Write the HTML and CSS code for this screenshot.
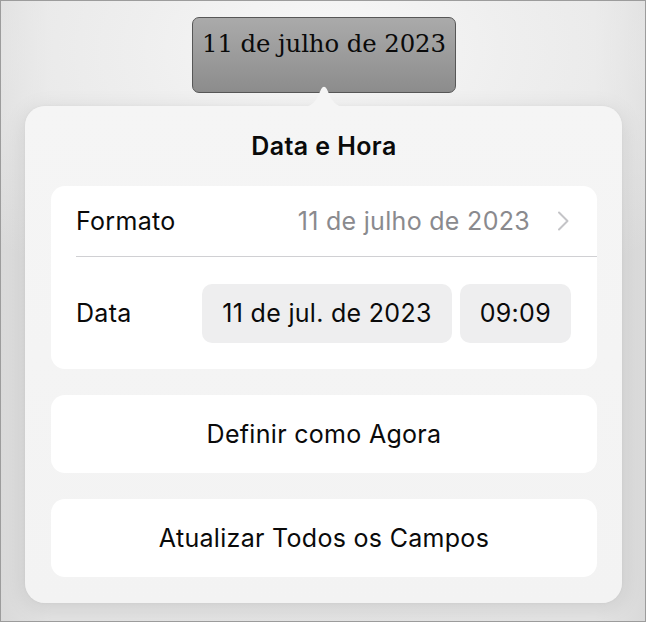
FILE: index.html
```html
<!DOCTYPE html>
<html lang="pt">
<head>
<meta charset="utf-8">
<title>Data e Hora</title>
<link rel="stylesheet" href="styles.css">
</head>
<body>
<div class="stage">
  <div class="field">11 de julho de 2023</div>
  <div class="popover">
    <svg class="arrow" width="48" height="22" viewBox="0 0 48 22" aria-hidden="true">
      <path d="M0 22 C10 22 14 19 18 11 L21.2 4 Q24 -0.6 26.8 4 L30 11 C34 19 38 22 48 22 Z" fill="#f5f5f5"/>
    </svg>
    <div class="title">Data e Hora</div>
    <div class="card">
      <div class="row row-format">
        <span class="label">Formato</span>
        <span class="value">11 de julho de 2023</span>
        <svg class="chevron" width="14" height="20" viewBox="0 0 14 20" aria-hidden="true">
          <path d="M3 1.5 L11.5 10 L3 18.5" fill="none" stroke="#c4c4c7" stroke-width="2" stroke-linecap="round" stroke-linejoin="round"/>
        </svg>
      </div>
      <div class="divider"></div>
      <div class="row row-date">
        <span class="label">Data</span>
        <div class="pills">
          <span class="pill">11 de jul. de 2023</span>
          <span class="pill">09:09</span>
        </div>
      </div>
    </div>
    <div class="card button">Definir como Agora</div>
    <div class="card button">Atualizar Todos os Campos</div>
  </div>
</div>
</body>
</html>
```
FILE: styles.css
```css
* { box-sizing: border-box; }

html, body {
  margin: 0;
  padding: 0;
}

body {
  width: 646px;
  height: 622px;
  overflow: hidden;
  border: 1px solid #9c9c9c;
  background:
    radial-gradient(ellipse 70% 45% at 50% 8%, rgba(248,248,248,1) 0%, rgba(240,240,240,0.9) 40%, rgba(226,226,226,0) 100%),
    linear-gradient(to right, #d9d9d9 0%, #e3e3e3 8%, #e4e4e4 92%, #d9d9d9 100%);
  font-family: Inter, "Noto Sans", sans-serif;
  color: #0a0a0a;
}

.stage {
  display: flex;
  flex-direction: column;
  align-items: flex-start;
  padding-top: 16px;
}

.field {
  margin-left: 191px;
  width: 264px;
  height: 76px;
  border: 1px solid #575757;
  border-radius: 7px;
  background: linear-gradient(to bottom, #aaaaaa 0%, #9a9a9a 55%, #8c8c8c 100%);
  font-family: "DejaVu Serif", "Liberation Serif", serif;
  font-size: 24.4px;
  line-height: 30px;
  color: #0a0a0a;
  text-align: center;
  padding-top: 11px;
  letter-spacing: -0.1px;
}

.popover {
  position: relative;
  margin-top: 13px;
  margin-left: 24px;
  width: 597px;
  height: 497px;
  border-radius: 20px;
  background: linear-gradient(to bottom, #f5f5f5 0%, #f3f3f3 100%);
  box-shadow: 0 4px 22px rgba(0,0,0,0.10), 0 0 3px rgba(0,0,0,0.04);
  padding: 25px 25px 26px 26px;
  display: flex;
  flex-direction: column;
  gap: 26px;
}

.arrow {
  position: absolute;
  top: -21px;
  left: 275px;
  z-index: 2;
}

.title {
  font-size: 25px;
  font-weight: 600;
  line-height: 30px;
  text-align: center;
  margin-bottom: -1px;
  letter-spacing: 0.4px;
}

.card {
  background: #ffffff;
  border-radius: 14px;
}

.row {
  display: flex;
  align-items: center;
  font-size: 25px;
  line-height: 30px;
  padding-left: 25px;
  letter-spacing: 0.3px;
}

.row-format {
  height: 70px;
  padding-right: 27px;
}

.label {
  flex: 1;
}

.value {
  color: #8a8a8e;
}

.chevron {
  margin-left: 26px;
}

.divider {
  height: 1px;
  background: #d0d0d3;
  margin-left: 25px;
}

.row-date {
  height: 112px;
  padding-right: 26px;
}

.pills {
  display: flex;
  gap: 8px;
}

.pill {
  display: flex;
  align-items: center;
  height: 59px;
  padding: 0 20px;
  border-radius: 10px;
  background: #eeeeef;
}

.button {
  height: 78px;
  display: flex;
  align-items: center;
  justify-content: center;
  font-size: 25px;
  line-height: 30px;
  letter-spacing: 0.3px;
}
```
